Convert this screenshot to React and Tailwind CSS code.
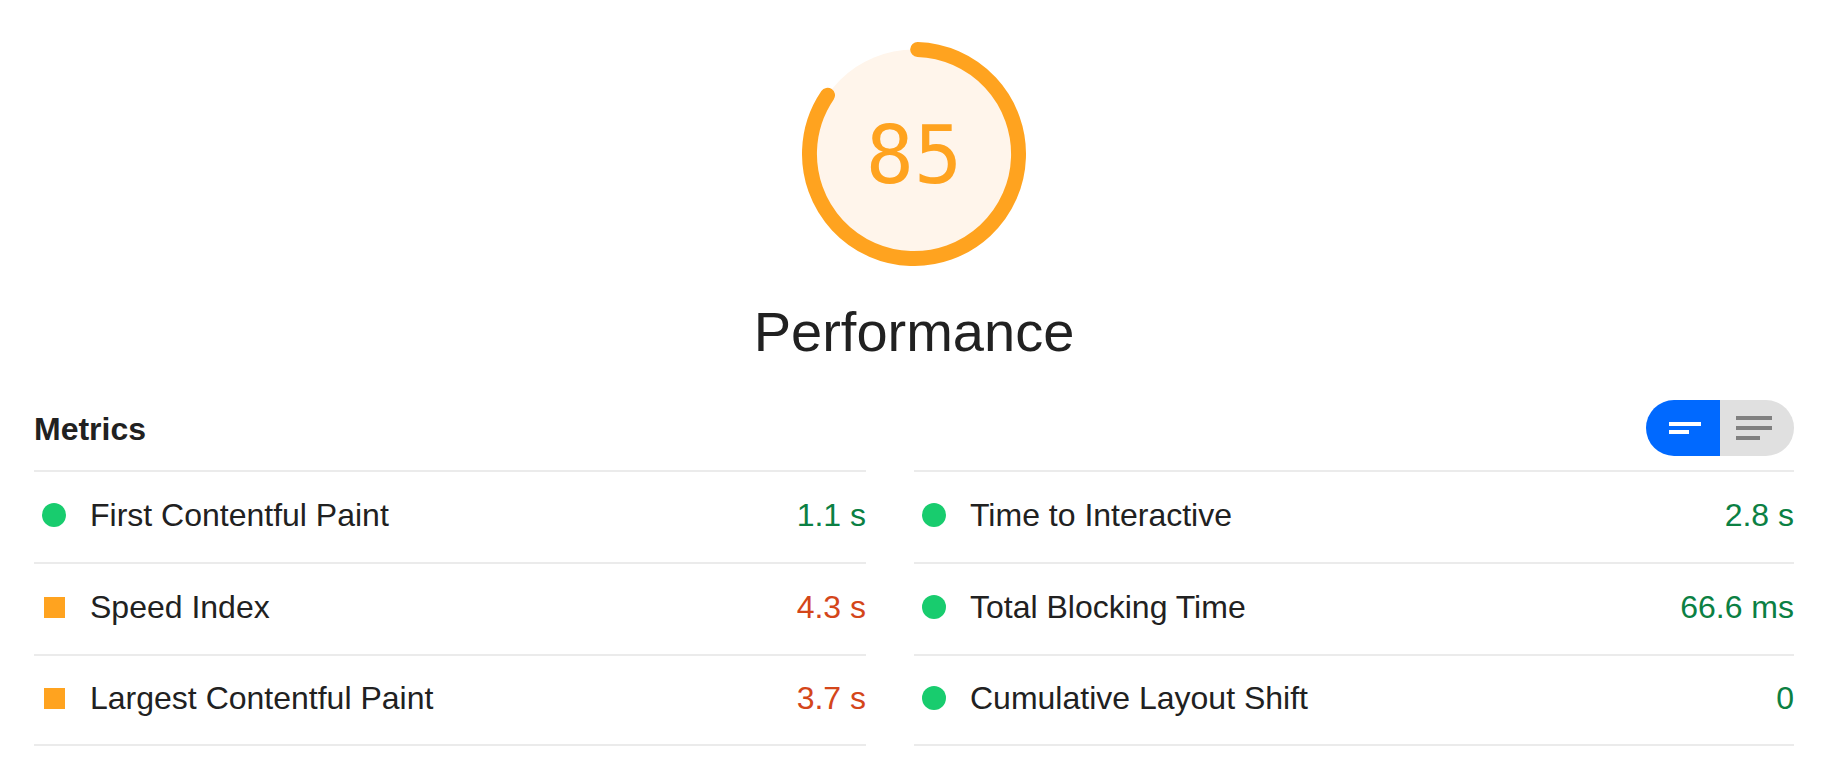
import React from 'react';

const metricsLeft = [
    { label: 'First Contentful Paint', value: '1.1 s', status: 'pass' },
    { label: 'Speed Index', value: '4.3 s', status: 'average' },
    { label: 'Largest Contentful Paint', value: '3.7 s', status: 'average' },
];

const metricsRight = [
    { label: 'Time to Interactive', value: '2.8 s', status: 'pass' },
    { label: 'Total Blocking Time', value: '66.6 ms', status: 'pass' },
    { label: 'Cumulative Layout Shift', value: '0', status: 'pass' },
];

// Gauge ring, drawn like the lighthouse one (viewBox 120, r=56)
function Gauge({ score }) {
    const circumference = 2 * Math.PI * 56;
    const dash = (score / 100) * circumference - 4;
    return (
        <div className="relative w-[224px] h-[224px]">
            <svg width="224" height="224" viewBox="0 0 120 120">
                <circle cx="60" cy="60" r="56" fill="#fff5eb" />
                <circle
                    cx="60"
                    cy="60"
                    r="56"
                    fill="none"
                    stroke="#ffa31f"
                    strokeWidth="8"
                    strokeLinecap="round"
                    strokeDasharray={`${dash} ${circumference}`}
                    transform="rotate(-88 60 60)"
                />
            </svg>
            <div className="absolute left-0 right-0 top-[74px] text-center text-[80px] leading-[80px] text-[#ffa31f] font-['DejaVu_Sans_Mono',monospace]">
                {score}
            </div>
        </div>
    );
}

function Indicator({ status }) {
    if (status === 'average') {
        return (
            <div className="w-[24px] h-[24px] flex items-center justify-center">
                <div className="w-[21px] h-[21px] bg-[#ffa31f]" />
            </div>
        );
    }
    return <div className="w-[24px] h-[24px] rounded-full bg-[#18cc6e]" />;
}

function MetricColumn({ items }) {
    return (
        <div className="border-t-2 border-[#ebebeb]">
            {items.map((m) => (
                <div key={m.label} className="h-[92px] last:h-[90px] border-b-2 border-[#ebebeb] flex items-center pb-[4px]">
                    <div className="pl-[8px] w-[56px] shrink-0">
                        <Indicator status={m.status} />
                    </div>
                    <span className="flex-1 text-[32px] text-[#212121]">{m.label}</span>
                    <span className={m.status === 'pass' ? 'text-[32px] text-[#0b8043]' : 'text-[32px] text-[#d4461a]'}>
                        {m.value}
                    </span>
                </div>
            ))}
        </div>
    );
}

function ViewToggle() {
    return (
        <div className="flex h-[56px] rounded-full overflow-hidden">
            <button className="w-[74px] h-full bg-[#0069ff] flex items-center justify-center pl-[4px]">
                <svg width="32" height="12" viewBox="0 0 32 12">
                    <rect x="0" y="0" width="32" height="4" fill="#fff" />
                    <rect x="0" y="8" width="20" height="4" fill="#fff" />
                </svg>
            </button>
            <button className="w-[74px] h-full bg-[#e0e0e0] flex items-center justify-center pr-[6px]">
                <svg width="36" height="24" viewBox="0 0 36 24">
                    <rect x="0" y="0" width="36" height="4" fill="#808080" />
                    <rect x="0" y="10" width="36" height="4" fill="#808080" />
                    <rect x="0" y="20" width="24" height="4" fill="#808080" />
                </svg>
            </button>
        </div>
    );
}

export default function App() {
    return (
        <div className="w-[1846px] h-[766px] bg-white overflow-hidden font-['Liberation_Sans',Arial,sans-serif]">
            <div className="ml-[34px] w-[1760px]">
                {/* Score gauge */}
                <div className="flex flex-col items-center pt-[42px]">
                    <Gauge score={85} />
                    <h1 className="mt-[38px] text-[56px] leading-[56px] text-[#212121]">Performance</h1>
                </div>

                {/* Metrics header */}
                <div className="mt-[40px] mb-[14px] flex items-center justify-between">
                    <h2 className="text-[32px] font-bold text-[#212121] pt-[2px]">Metrics</h2>
                    <ViewToggle />
                </div>

                <div className="grid grid-cols-[832px_880px] gap-x-[48px]">
                    <MetricColumn items={metricsLeft} />
                    <MetricColumn items={metricsRight} />
                </div>
            </div>
        </div>
    );
}
